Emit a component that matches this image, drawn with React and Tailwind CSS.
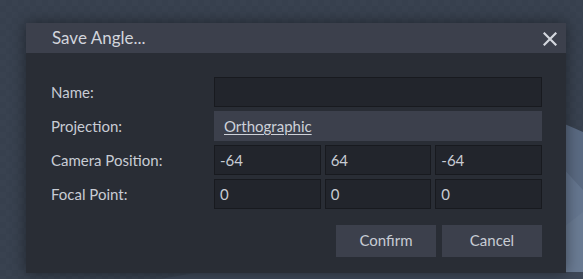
import React from "react";

function Field({ children, className = "" }) {
  return (
    <div className={`h-[30px] flex items-center bg-[#22252c] border border-[#181a1f] px-[5px] text-[15px] text-[#c8ccd4] ${className}`}>
      {children}
    </div>
  );
}

export default function App() {
  return (
    <div className="relative w-[583px] h-[279px] overflow-hidden bg-[#37404e]" style={{ fontFamily: "Lato, 'Noto Sans', sans-serif" }}>
      <svg className="absolute inset-0" width="583" height="279" viewBox="0 0 583 279">
        <defs>
          <pattern id="grid" width="12" height="12" patternUnits="userSpaceOnUse">
            <rect width="12" height="12" fill="#37404e" />
            <rect width="6" height="6" fill="#394250" />
            <rect x="6" y="6" width="6" height="6" fill="#394250" />
          </pattern>
        </defs>
        <rect width="583" height="279" fill="url(#grid)" />
        <polygon points="560,122 583,132 583,279 560,279" fill="#5a6a82" />
        <polygon points="560,165 583,190 583,279 560,279" fill="#65768f" />
        <polygon points="560,230 583,212 583,279 560,279" fill="#6a7b93" />
        <polygon points="160,279 583,279 583,272 200,272" fill="#3e4858" />
      </svg>
      <div className="relative pt-[23px] pl-[26px]">
        <div className="w-[540px] h-[250px] bg-[#292d35] shadow-[0_0_14px_rgba(0,0,0,0.45)] flex flex-col">
          <div className="h-[30px] bg-[#3c404c] flex items-center justify-between pl-[26px] pr-[9px]">
            <span className="text-[17px] text-[#d2d5dc]">Save Angle...</span>
            <svg width="14" height="14" viewBox="0 0 14 14" className="mt-[1px]">
              <path d="M1.5 1.5 L12.5 12.5 M12.5 1.5 L1.5 12.5" stroke="#d4d7de" strokeWidth="2.2" strokeLinecap="square" />
            </svg>
          </div>
          <div className="flex flex-col pt-[24px] pl-[25px] pr-[24px] text-[15px] text-[#c8ccd4]">
            <div className="grid grid-cols-[163px_1fr] gap-y-[4px]">
              <div className="h-[30px] flex items-center">Name:</div>
              <Field />
              <div className="h-[30px] flex items-center">Projection:</div>
              <div className="h-[30px] flex items-center bg-[#3c404c] px-[10px] text-[#cdd1d9] underline underline-offset-2">Orthographic</div>
              <div className="h-[30px] flex items-center">Camera Position:</div>
              <div className="grid grid-cols-3 gap-[4px]">
                <Field>-64</Field>
                <Field>64</Field>
                <Field>-64</Field>
              </div>
              <div className="h-[30px] flex items-center">Focal Point:</div>
              <div className="grid grid-cols-3 gap-[4px]">
                <Field>0</Field>
                <Field>0</Field>
                <Field>0</Field>
              </div>
            </div>
            <div className="flex justify-end gap-[6px] mt-[16px]">
              <button className="w-[100px] h-[32px] pb-[1px] bg-[#3c404c] text-[15px] text-[#c8ccd4]">Confirm</button>
              <button className="w-[100px] h-[32px] pb-[1px] bg-[#3c404c] text-[15px] text-[#c8ccd4]">Cancel</button>
            </div>
          </div>
        </div>
      </div>
    </div>
  );
}
